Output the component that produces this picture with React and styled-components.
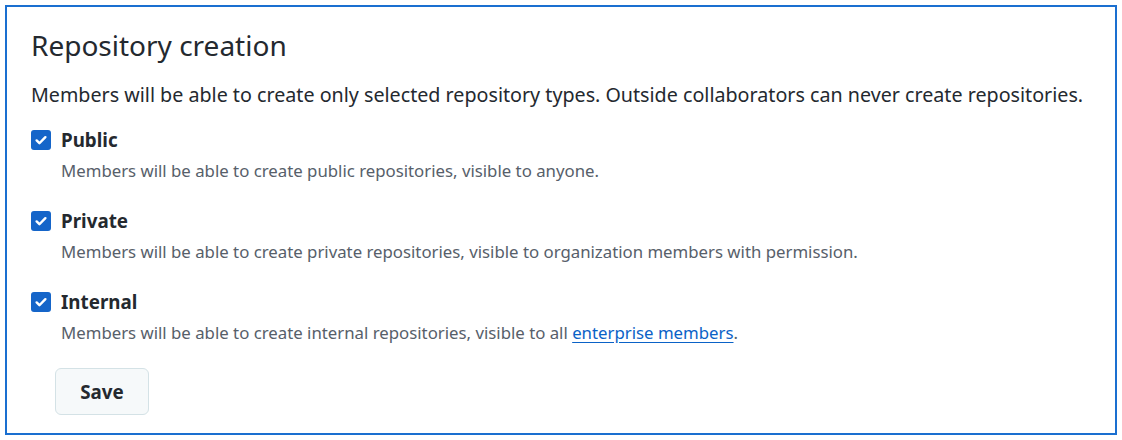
import styled, { createGlobalStyle } from "styled-components";

const GlobalStyle = createGlobalStyle`
    body {
        margin: 0;
        background: #ffffff;
        font-family: "Noto Sans", "Open Sans", sans-serif;
        color: #24292f;
    }
`

const Frame = styled.div`
    box-sizing: border-box;
    width: 1112px;
    height: 430px;
    margin: 5px 0 0 5px;
    border: 2px solid #1a6fd0;
    padding: 20px 24px 0 24px;
`

const Title = styled.h2`
    margin: 0;
    font-size: 28px;
    font-weight: 400;
    line-height: 36px;
    color: #24292f;
`

const Lead = styled.p`
    margin: 19px 0 0 0;
    font-size: 19.7px;
    line-height: 26px;
`

const OptionList = styled.div`
    display: flex;
    flex-direction: column;
    gap: 26px;
    margin-top: 19px;
`

const Option = styled.div`
    display: flex;
    flex-direction: column;
`

const OptionHead = styled.label`
    display: flex;
    align-items: center;
    gap: 10px;
    font-size: 18.8px;
    font-weight: 700;
    line-height: 26px;
`

const Box = styled.span`
    display: inline-flex;
    align-items: center;
    justify-content: center;
    width: 20px;
    height: 20px;
    border-radius: 3px;
    background: #1565c9;
`

const OptionNote = styled.div`
    margin-left: 30px;
    margin-top: 7px;
    font-size: 16.8px;
    line-height: 22px;
    color: #57606a;
`

const NoteLink = styled.a`
    color: #0a62c7;
    text-decoration: underline;
    text-underline-offset: 3px;
`

const SaveButton = styled.button`
    display: block;
    margin: 24px 0 0 24px;
    width: 94px;
    height: 47px;
    border: 1px solid #d4e2e6;
    border-radius: 6px;
    background: #f6f9fa;
    font-family: inherit;
    font-size: 18.8px;
    font-weight: 700;
    color: #24292f;
`

function Check() {
    return (
        <Box>
            <svg width="14" height="14" viewBox="0 0 16 16">
                <path d="M3 8.5l3.2 3.2L13 4.8" fill="none" stroke="#fff" strokeWidth="2.8" strokeLinecap="round" strokeLinejoin="round" />
            </svg>
        </Box>
    )
}

const options = [
    { name: "Public", note: "Members will be able to create public repositories, visible to anyone." },
    { name: "Private", note: "Members will be able to create private repositories, visible to organization members with permission." },
    { name: "Internal", note: "Members will be able to create internal repositories, visible to all ", link: "enterprise members" },
]

export default function App() {
    return (
        <>
            <GlobalStyle />
            <Frame>
                <Title>Repository creation</Title>
                <Lead>Members will be able to create only selected repository types. Outside collaborators can never create repositories.</Lead>
                <OptionList>
                    {options.map((o) => (
                        <Option key={o.name}>
                            <OptionHead>
                                <Check />
                                {o.name}
                            </OptionHead>
                            <OptionNote>
                                {o.note}
                                {o.link && (<><NoteLink href="#">{o.link}</NoteLink>.</>)}
                            </OptionNote>
                        </Option>
                    ))}
                </OptionList>
                <SaveButton>Save</SaveButton>
            </Frame>
        </>
    )
}
